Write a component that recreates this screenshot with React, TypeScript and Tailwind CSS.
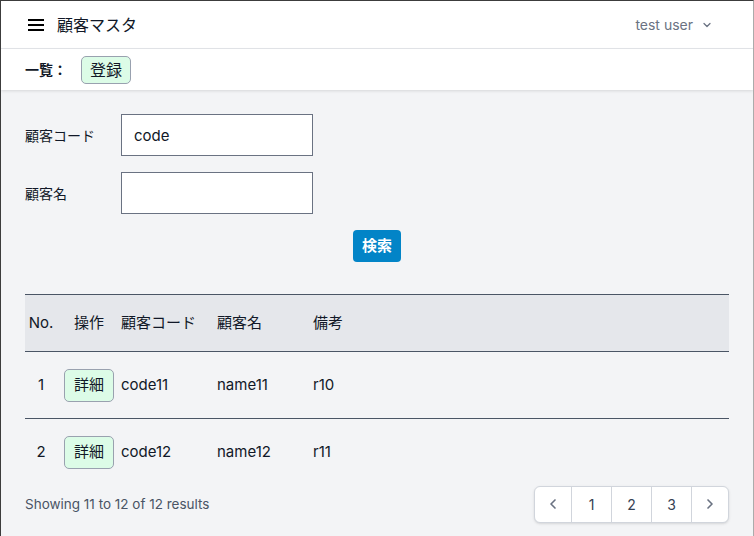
import { ChevronDown, ChevronLeft, ChevronRight } from 'lucide-react'

const ROWS = [
  { no: 1, code: 'code11', name: 'name11', remark: 'r10' },
  { no: 2, code: 'code12', name: 'name12', remark: 'r11' },
]

const FONT = { fontFamily: 'Inter, "Noto Sans CJK JP", sans-serif' }

export default function App() {
  return (
    <div
      className="flex h-[536px] w-[754px] flex-col overflow-hidden border-l border-t border-r border-l-[#3c3c3c] border-t-[#3c3c3c] border-r-[#ababab] bg-[#f3f4f6] text-[#111827]"
      style={FONT}
    >
      {/* top bar */}
      <header className="flex h-[48px] shrink-0 items-center justify-between border-b border-gray-200 bg-white pl-[25px] pr-[40px]">
        <div className="flex items-center gap-[11px]">
          <svg width="20" height="20" viewBox="0 0 20 20" className="text-black">
            <path d="M2 5h16M2 10h16M2 15h16" stroke="currentColor" strokeWidth="2" />
          </svg>
          <span className="text-[16px] leading-none">顧客マスタ</span>
        </div>
        <button type="button" className="flex items-center gap-[8px] text-[14px] text-gray-500">
          test user
          <ChevronDown size={12} strokeWidth={2.5} />
        </button>
      </header>

      <div className="flex h-[41px] shrink-0 items-center gap-[14px] bg-white px-[24px] shadow-[0_1px_3px_rgba(0,0,0,0.12)]">
        <span className="text-[14px] font-bold">一覧：</span>
        <button
          type="button"
          className="h-[28px] rounded-[5px] border border-gray-400 bg-[#dcfce7] px-[8px] text-[16px] leading-none"
        >
          登録
        </button>
      </div>

      <main className="flex flex-1 flex-col px-[24px] pt-[24px]">
        <div className="flex flex-col gap-[16px]">
          <div className="flex items-center">
            <label className="w-[96px] text-[14px]">顧客コード</label>
            <input
              defaultValue="code"
              className="h-[42px] w-[192px] border border-gray-500 bg-white px-[12px] text-[15px] outline-none"
            />
          </div>
          <div className="flex items-center">
            <label className="w-[96px] text-[14px]">顧客名</label>
            <input className="h-[42px] w-[192px] border border-gray-500 bg-white px-[12px] text-[15px] outline-none" />
          </div>
        </div>

        <div className="mt-[16px] flex w-[376px] justify-end">
          <button
            type="button"
            className="h-[32px] w-[48px] rounded-[4px] bg-[#0284c7] text-[15px] font-bold text-white"
          >
            検索
          </button>
        </div>

        <table className="mt-[32px] w-full border-collapse text-[15px]">
          <thead>
            <tr className="h-[57px] border-y border-gray-600 bg-gray-200">
              <th className="w-[32px] text-center font-normal">No.</th>
              <th className="w-[64px] text-center font-normal">操作</th>
              <th className="w-[96px] text-left font-normal">顧客コード</th>
              <th className="w-[96px] text-left font-normal">顧客名</th>
              <th className="text-left font-normal">備考</th>
            </tr>
          </thead>
          <tbody>
            {ROWS.map((r, i) => (
              <tr key={r.no} className={`h-[67px] ${i < ROWS.length - 1 ? 'border-b border-gray-600' : ''}`}>
                <td className="text-center">{r.no}</td>
                <td className="text-center">
                  <button
                    type="button"
                    className="h-[33px] w-[50px] rounded-[5px] border border-gray-400 bg-[#dcfce7] text-[15px]"
                  >
                    詳細
                  </button>
                </td>
                <td>{r.code}</td>
                <td>{r.name}</td>
                <td>{r.remark}</td>
              </tr>
            ))}
          </tbody>
        </table>

        <div className="flex items-center justify-between">
          <p className="text-[13.5px] text-gray-600">Showing 11 to 12 of 12 results</p>
          <nav className="flex h-[37px] overflow-hidden rounded-md border border-gray-300 bg-white text-[14px] text-gray-700 shadow-sm">
            <span className="flex w-[36px] items-center justify-center text-gray-500">
              <ChevronLeft size={16} strokeWidth={2.5} />
            </span>
            {[1, 2, 3].map((n) => (
              <span key={n} className="flex w-[40px] items-center justify-center border-l border-gray-300">
                {n}
              </span>
            ))}
            <span className="flex w-[37px] items-center justify-center border-l border-gray-300 text-gray-500">
              <ChevronRight size={16} strokeWidth={2.5} />
            </span>
          </nav>
        </div>
      </main>
    </div>
  )
}
